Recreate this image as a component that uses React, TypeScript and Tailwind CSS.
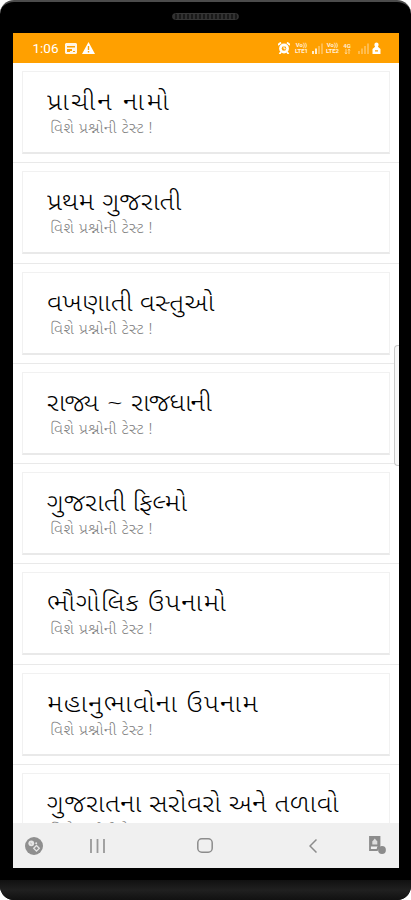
import React from 'react';

type Quiz = {
  title: string;
  tracking: string;
};

const quizzes: Quiz[] = [
  { title: 'પ્રાચીન નામો', tracking: 'tracking-[2.1px]' },
  { title: 'પ્રથમ ગુજરાતી', tracking: 'tracking-[0.1px] [word-spacing:1px]' },
  { title: 'વખણાતી વસ્તુઓ', tracking: 'tracking-[0.2px]' },
  { title: 'રાજ્ય ~ રાજધાની', tracking: 'tracking-[-0.9px] [word-spacing:3.2px]' },
  { title: 'ગુજરાતી ફિલ્મો', tracking: 'tracking-normal' },
  { title: 'ભૌગોલિક ઉપનામો', tracking: 'tracking-[1px]' },
  { title: 'મહાનુભાવોના ઉપનામ', tracking: 'tracking-[1.1px]' },
  { title: 'ગુજરાતના સરોવરો અને તળાવો', tracking: 'tracking-[0.4px]' },
];

const QuizRow: React.FC<Quiz> = ({ title, tracking }) => {
  return (
    <li className="h-[100.3px] shrink-0 border-b border-[#e9e9e9] px-[9px] pt-2">
      <div className="h-[83px] border border-b-2 border-[#f1f1f1] border-b-[#e9e9e9] bg-white pl-6 pt-[17px] whitespace-nowrap">
        <h2
          className={`h-[30px] origin-left scale-x-110 text-[24.5px] leading-[30px] font-light text-black ${tracking}`}
        >
          {title}
        </h2>
        <p className="ml-[3px] h-5 origin-left scale-x-106 text-[15px] leading-[22px] font-light tracking-[0.5px] text-[#808080]">
          વિશે પ્રશ્નોની ટેસ્ટ !
        </p>
      </div>
    </li>
  );
};

const Volte: React.FC<{ sim: string }> = ({ sim }) => (
  <span className="flex w-[14px] flex-col items-center text-[6px] leading-[6px] font-bold opacity-85">
    <span>Vo))</span>
    <span>LTE{sim}</span>
  </span>
);

const Signal: React.FC<{ bars: number }> = ({ bars }) => (
  <svg width="11" height="11" viewBox="0 0 11 11" fill="white">
    {[0, 1, 2, 3].map((i) => (
      <rect
        key={i}
        x={i * 3}
        y={8 - i * 2.5}
        width="2"
        height={3 + i * 2.5}
        opacity={i < bars ? 0.8 : 0.3}
      />
    ))}
  </svg>
);

const StatusBar: React.FC = () => {
  return (
    <div className="flex h-[30px] shrink-0 items-center justify-between bg-[#ffa000] pl-5 pr-[18px] text-white">
      <div className="flex items-center">
        <span className="w-8 text-[13.5px] font-['Roboto',sans-serif]">1:06</span>
        <svg width="12" height="11" viewBox="0 0 12 11" className="opacity-90">
          <path
            fill="white"
            fillRule="evenodd"
            d="M1 0h10l1 1v9l-1 1H1l-1-1V1zM2 3v1.5h8V3zM2 6v3h3V8h2V6zM8 8v1h2V8z"
          />
        </svg>
        <svg width="13" height="12" viewBox="0 0 13 12" className="ml-[5px]">
          <path
            fill="white"
            fillRule="evenodd"
            d="M6.5 0 13 12H0zM5.8 4v4h1.4V4zm0 5v1.5h1.4V9z"
          />
        </svg>
      </div>
      <div className="flex items-center gap-[3px] font-['Roboto',sans-serif]">
        <svg width="12" height="12" viewBox="0 0 12 12" className="mr-[2px]">
          <path d="M0 3 3 .5M9 .5 12 3M3 10l-1.5 2M9 10l1.5 2" stroke="white" strokeWidth="1.8" />
          <circle cx="6" cy="6.5" r="4.2" fill="white" stroke="white" strokeWidth="1.4" />
          <circle cx="6" cy="6.5" r="2.3" fill="#ffa000" />
          <path d="M6 4.5v2.3h1.7" fill="none" stroke="white" />
        </svg>
        <Volte sim="1" />
        <Signal bars={2} />
        <Volte sim="2" />
        <span className="flex w-[9px] flex-col items-center text-[6px] leading-[6px] font-bold opacity-80">
          <span>4G</span>
          <svg width="7" height="5" viewBox="0 0 7 5" className="opacity-70">
            <path d="M2 5V0M5 0v5M1 3.5 2 5l1-1.5M4 1.5 5 0l1 1.5" fill="none" stroke="white" />
          </svg>
        </span>
        <span className="pl-[3px]">
          <Signal bars={0} />
        </span>
        <svg width="9" height="12" viewBox="0 0 9 12" fill="white">
          <path
            fillRule="evenodd"
            d="M4.5.5a2.1 2.1 0 0 1 2.1 2.1c0 .9-.3 1.6-.7 2.2L8.5 7v5h-8V7l2.6-2.2a3.4 3.4 0 0 1-.7-2.2A2.1 2.1 0 0 1 4.5.5zM3 8.3v1.2h3V8.3z"
          />
        </svg>
      </div>
    </div>
  );
};

const NavBar: React.FC = () => {
  return (
    <div className="flex h-[45px] shrink-0 items-center bg-[#f0f0f0]">
      <svg width="18" height="18" viewBox="0 0 18 18" className="ml-3">
        <circle cx="9" cy="9" r="9" fill="#8f8f8f" />
        <circle cx="6.3" cy="6.3" r="2.9" fill="#e6e6e6" />
        <path d="m5.2 5.8 1.8 1.6" stroke="#aaaaaa" strokeWidth=".8" />
        <path d="m11.5 8.5 2.8 2.8-2.8 2.8-2.8-2.8z" fill="#8f8f8f" stroke="#e6e6e6" strokeWidth="1.3" />
        <circle cx="11.2" cy="6.3" r="1" fill="#e6e6e6" />
      </svg>
      <svg width="15" height="14" viewBox="0 0 15 14" className="ml-[47px]">
        <path d="M1 0v14M7.5 0v14M14 0v14" stroke="#999999" strokeWidth="1.8" />
      </svg>
      <svg width="16" height="15" viewBox="0 0 16 15" className="ml-[92px]">
        <rect x=".8" y=".8" width="14.4" height="13.4" rx="4" fill="none" stroke="#8c8c8c" strokeWidth="1.5" />
      </svg>
      <svg width="8" height="14" viewBox="0 0 8 14" className="ml-[96px]">
        <path d="M7.5.5 1 7l6.5 6.5" fill="none" stroke="#8c8c8c" strokeWidth="1.5" />
      </svg>
      <svg width="17" height="19" viewBox="0 0 17 19" className="ml-[52px]">
        <path d="M1 1h9.5v8.5L8 14H1z" fill="#f0f0f0" stroke="#8c8c8c" strokeWidth="1.8" />
        <path d="M1 1h9.5v9.5H1z" fill="#8c8c8c" />
        <path d="M5.8 2.5 8.3 5.5v3h-5v-3z" fill="#dedede" />
        <circle cx="13" cy="14" r="3.9" fill="#8c8c8c" />
        <circle cx="9.5" cy="11.5" r="1.5" fill="#8c8c8c" />
      </svg>
    </div>
  );
};

const App: React.FC = () => {
  return (
    <div className="flex h-[900px] w-[411px] flex-col overflow-hidden bg-white font-['Noto_Sans_Gujarati','Noto_Sans',sans-serif]">
      <div className="flex h-[900px] flex-col overflow-hidden rounded-[14px] border-t-2 border-[#4b4b4b] bg-black">
        <div className="flex h-[31px] shrink-0 justify-center pt-[11px]">
          <div className="h-[7px] w-[67px] rounded-full border border-[#363636] bg-[repeating-linear-gradient(90deg,#303030_0px,#303030_2px,#191919_2px,#191919_4px)]" />
        </div>
        <div className="relative mx-auto flex h-[835px] w-[386px] shrink-0 flex-col overflow-hidden bg-white">
          <StatusBar />
          <ul className="flex min-h-0 flex-1 flex-col overflow-hidden">
            {quizzes.map((quiz) => (
              <QuizRow key={quiz.title} title={quiz.title} tracking={quiz.tracking} />
            ))}
          </ul>
          <NavBar />
          {/* Edge panel handle */}
          <div className="absolute right-0 top-[312px] h-[121px] w-[5px] rounded-l-[4px] border border-r-0 border-[#c9c9c9] bg-[#f8f8f8]" />
        </div>
        <div className="mt-[12px] h-5 shrink-0 bg-linear-to-b from-[#111111] via-[#202020] to-[#111111]" />
      </div>
    </div>
  );
};

export default App;
